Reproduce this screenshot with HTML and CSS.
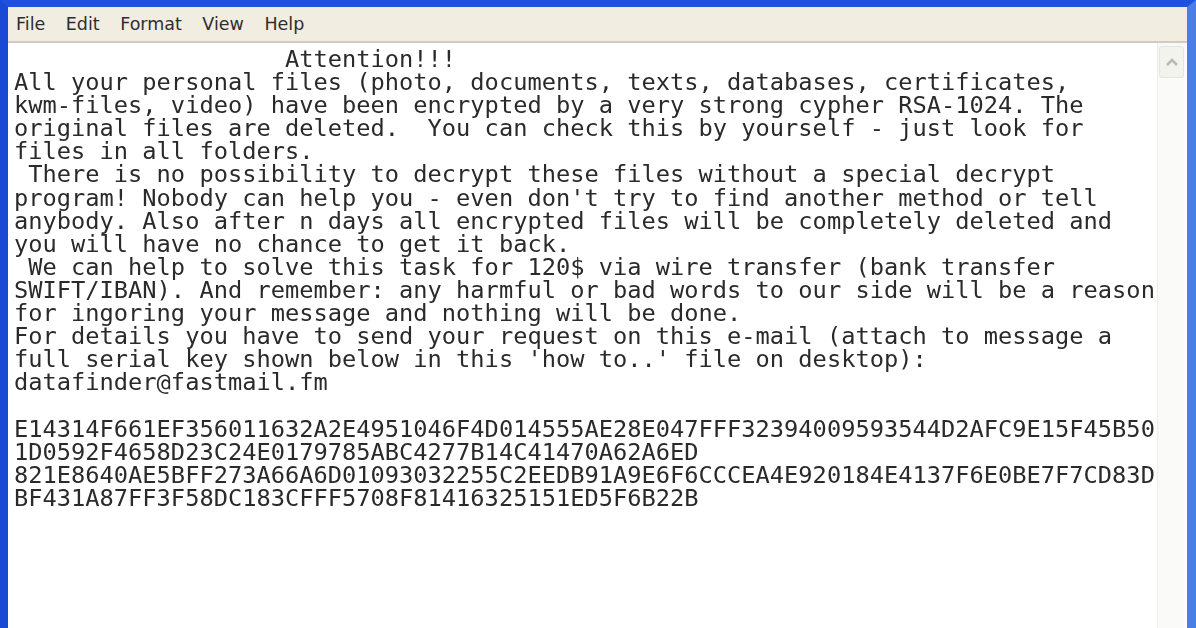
FILE: index.html
```html
<!DOCTYPE html>
<html>
<head>
<meta charset="utf-8">
<link rel="stylesheet" href="styles.css">
</head>
<body>
<div class="window">
  <div class="menubar">
    <span class="menu">File</span>
    <span class="menu">Edit</span>
    <span class="menu">Format</span>
    <span class="menu">View</span>
    <span class="menu">Help</span>
  </div>
  <div class="editor">
<pre class="text">                   Attention!!!
All your personal files (photo, documents, texts, databases, certificates,
kwm-files, video) have been encrypted by a very strong cypher RSA-1024. The
original files are deleted.  You can check this by yourself - just look for
files in all folders.
 There is no possibility to decrypt these files without a special decrypt
program! Nobody can help you - even don't try to find another method or tell
anybody. Also after n days all encrypted files will be completely deleted and
you will have no chance to get it back.
 We can help to solve this task for 120$ via wire transfer (bank transfer
SWIFT/IBAN). And remember: any harmful or bad words to our side will be a reason
for ingoring your message and nothing will be done.
For details you have to send your request on this e-mail (attach to message a
full serial key shown below in this 'how to..' file on desktop):
datafinder@fastmail.fm

E14314F661EF356011632A2E4951046F4D014555AE28E047FFF32394009593544D2AFC9E15F45B50
1D0592F4658D23C24E0179785ABC4277B14C41470A62A6ED
821E8640AE5BFF273A66A6D01093032255C2EEDB91A9E6F6CCCEA4E920184E4137F6E0BE7F7CD83D
BF431A87FF3F58DC183CFFF5708F81416325151ED5F6B22B</pre>
    <div class="scrollbar">
      <div class="sb-up">
        <svg width="14" height="10" viewBox="0 0 14 10"><path d="M2 8 L7 3 L12 8" fill="none" stroke="#b9b9b2" stroke-width="2.6"/></svg>
      </div>
      <div class="sb-track"></div>
    </div>
  </div>
</div>
</body>
</html>
```

FILE: styles.css
```css
html, body {
  margin: 0;
  padding: 0;
  width: 1196px;
  height: 628px;
  overflow: hidden;
}
.window {
  width: 1196px;
  height: 628px;
  box-sizing: border-box;
  border-top: 7px solid #1f52dc;
  border-left: 8px solid #1a49d6;
  border-right: 9px solid #4a7ee4;
  background: #ffffff;
  display: flex;
  flex-direction: column;
}
.menubar {
  height: 34px;
  background: #f1ede1;
  border-bottom: 2px solid #cfcbc0;
  box-shadow: 0 1px 0 #ffffff;
  display: flex;
  align-items: center;
  padding-left: 8px;
  gap: 20.5px;
  font-family: "DejaVu Sans", Verdana, sans-serif;
  font-size: 17.5px;
  color: #2e2e2e;
}
.editor {
  flex: 1;
  display: flex;
  min-height: 0;
}
.text {
  flex: 1;
  margin: 0;
  padding: 5px 0 0 6px;
  font-family: "DejaVu Sans Mono", "Liberation Mono", monospace;
  font-size: 23.7px;
  line-height: 23.1px;
  color: #2a2a2a;
  white-space: pre;
  overflow: hidden;
  filter: blur(0.35px);
}
.scrollbar {
  width: 27px;
  margin-right: 2px;
  display: flex;
  flex-direction: column;
  background: #f8f8f5;
  border-left: 1px solid #eeeee8;
}
.sb-up {
  height: 30px;
  margin: 3px 1px 0 1px;
  border: 1px solid #e6e6df;
  border-radius: 3px;
  background: #f3f3ee;
  display: flex;
  align-items: center;
  justify-content: center;
}
.sb-track {
  flex: 1;
  background: #fafaf8;
}
```
